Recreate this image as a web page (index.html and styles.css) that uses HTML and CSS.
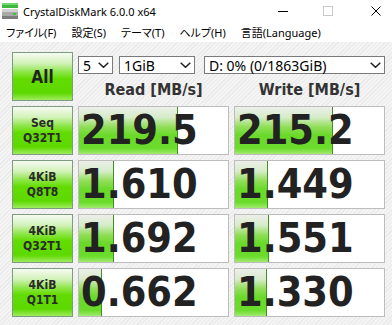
FILE: index.html
```html
<!DOCTYPE html>
<html lang="ja">
<head>
    <meta charset="UTF-8">
    <title>CrystalDiskMark 6.0.0 x64</title>
    <link rel="stylesheet" href="styles.css">
</head>
<body>
    <div class="titlebar">
        <svg class="app-icon" viewBox="0 0 16 16">
            <rect x="0" y="0" width="16" height="5" fill="#3cb83c"/>
            <rect x="0" y="0" width="16" height="2" fill="#6fd86f"/>
            <rect x="0" y="6" width="16" height="10" fill="#a8a8a8"/>
            <rect x="0" y="6" width="16" height="3" fill="#d0d0d0"/>
            <rect x="0" y="13" width="16" height="3" fill="#7c7c7c"/>
            <rect x="11" y="10" width="3" height="2" fill="#33cc33"/>
        </svg>
        <span class="title">CrystalDiskMark 6.0.0 x64</span>
        <div class="controls">
            <svg class="ctl-min" viewBox="0 0 10 10"><line x1="0" y1="5.5" x2="10" y2="5.5" stroke="#000" stroke-width="1"/></svg>
            <svg class="ctl-max" viewBox="0 0 10 10"><rect x="0.5" y="0.5" width="9" height="9" fill="none" stroke="#c8c8c8" stroke-width="1"/></svg>
            <svg class="ctl-close" viewBox="0 0 10 10"><path d="M0.5 0.5 L9.5 9.5 M9.5 0.5 L0.5 9.5" stroke="#000" stroke-width="1"/></svg>
        </div>
    </div>

    <div class="menubar">
        <span>ファイル(F)</span>
        <span>設定(S)</span>
        <span>テーマ(T)</span>
        <span>ヘルプ(H)</span>
        <span>言語(Language)</span>
    </div>

    <div class="main">
        <div class="btn all">All</div>
        <div class="top">
            <div class="selects">
                <div class="select s-count"><span>5</span><svg viewBox="0 0 11 6"><polyline points="0.7,0.7 5.5,5.3 10.3,0.7" fill="none" stroke="#222" stroke-width="1.5"/></svg></div>
                <div class="select s-size"><span>1GiB</span><svg viewBox="0 0 11 6"><polyline points="0.7,0.7 5.5,5.3 10.3,0.7" fill="none" stroke="#222" stroke-width="1.5"/></svg></div>
                <div class="select s-drive"><span>D: 0% (0/1863GiB)</span><svg viewBox="0 0 11 6"><polyline points="0.7,0.7 5.5,5.3 10.3,0.7" fill="none" stroke="#222" stroke-width="1.5"/></svg></div>
            </div>
            <div class="heads">
                <div>Read [MB/s]</div>
                <div>Write [MB/s]</div>
            </div>
        </div>

        <div class="btn label">Seq<br>Q32T1</div>
        <div class="value"><div class="bar" style="width:99px"></div><span class="num">219.5</span></div>
        <div class="value"><div class="bar" style="width:98px"></div><span class="num">215.2</span></div>

        <div class="btn label">4KiB<br>Q8T8</div>
        <div class="value"><div class="bar" style="width:35px"></div><span class="num">1.610</span></div>
        <div class="value"><div class="bar" style="width:33px"></div><span class="num">1.449</span></div>

        <div class="btn label">4KiB<br>Q32T1</div>
        <div class="value"><div class="bar" style="width:35px"></div><span class="num">1.692</span></div>
        <div class="value"><div class="bar" style="width:34px"></div><span class="num">1.551</span></div>

        <div class="btn label">4KiB<br>Q1T1</div>
        <div class="value"><div class="bar" style="width:23px"></div><span class="num">0.662</span></div>
        <div class="value"><div class="bar" style="width:32px"></div><span class="num">1.330</span></div>
    </div>
</body>
</html>
```

FILE: styles.css
```css
body {
    margin: 0;
    width: 392px;
    height: 325px;
    overflow: hidden;
    background: #fff;
    font-family: "Noto Sans", "Noto Sans CJK JP", sans-serif;
    color: #000;
}
.titlebar {
    height: 22px;
    display: flex;
    align-items: center;
}
.app-icon {
    width: 16px;
    height: 16px;
    margin-left: 2px;
}
.title {
    margin-left: 5px;
    font-size: 11px;
}
.controls {
    margin-left: auto;
    padding-right: 11px;
    display: flex;
    align-items: center;
}
.controls svg {
    width: 10px;
    height: 10px;
}
.ctl-max {
    margin-left: 35px;
}
.ctl-close {
    margin-left: 38px;
}
.menubar {
    height: 20px;
    display: flex;
    align-items: center;
    gap: 15px;
    padding-left: 6px;
    font-size: 11px;
    font-feature-settings: "palt";
}
.main {
    height: 283px;
    box-sizing: border-box;
    padding: 10px 0 0 12px;
    display: grid;
    grid-template-columns: 61px 151px 151px;
    grid-auto-rows: 49px;
    gap: 5px;
    background: repeating-linear-gradient(135deg, #f4f4f4 0 2px, #eaeaea 2px 3px);
}
.btn {
    box-sizing: border-box;
    border: 1px solid #7f9b7f;
    background: linear-gradient(to bottom, #f6fbf2 0%, #d2f2b8 22%, #8ee64a 40%, #62dc00 55%, #5ed900 85%, #9eec5e 100%);
    display: flex;
    align-items: center;
    justify-content: center;
    text-align: center;
    color: #222;
    font-family: "DejaVu Sans Condensed", "DejaVu Sans", sans-serif;
    font-weight: bold;
}
.all {
    font-size: 17px;
}
.label {
    font-size: 12px;
    line-height: 15px;
    color: #2a2a2a;
}
.top {
    grid-column: 2 / 4;
    display: flex;
    flex-direction: column;
}
.selects {
    display: flex;
    margin-top: 4px;
}
.select {
    box-sizing: border-box;
    height: 18px;
    border: 1px solid #7a7a7a;
    background: #fff;
    display: flex;
    align-items: center;
    justify-content: space-between;
    padding: 0 3px 0 4px;
    font-size: 14px;
}
.select svg {
    width: 11px;
    height: 6px;
}
.s-count {
    width: 35px;
}
.s-size {
    width: 76px;
    margin-left: 6px;
}
.s-drive {
    width: 181px;
    margin-left: 9px;
}
.heads {
    display: grid;
    grid-template-columns: 151px 151px;
    gap: 5px;
    margin-top: 6px;
    text-align: center;
    font-family: "DejaVu Sans Condensed", "DejaVu Sans", sans-serif;
    font-weight: bold;
    font-size: 16px;
    line-height: 20px;
    color: #333;
}
.value {
    position: relative;
    box-sizing: border-box;
    border: 1px solid #bdbdbd;
    background: #fff;
    display: flex;
    align-items: center;
    overflow: hidden;
}
.bar {
    position: absolute;
    left: 0;
    top: 0;
    bottom: 0;
    box-sizing: border-box;
    border-right: 1px solid #3f8f25;
    background: linear-gradient(to bottom, #ecefea 0%, #d6ecc8 22%, #92de5a 42%, #6ad92a 60%, #6cdc2c 88%, #a2ea70 100%);
}
.num {
    position: relative;
    padding-left: 2px;
    font-family: "DejaVu Sans Condensed", "DejaVu Sans", sans-serif;
    font-weight: bold;
    font-size: 41px;
    line-height: 1;
    color: #222;
}
```
